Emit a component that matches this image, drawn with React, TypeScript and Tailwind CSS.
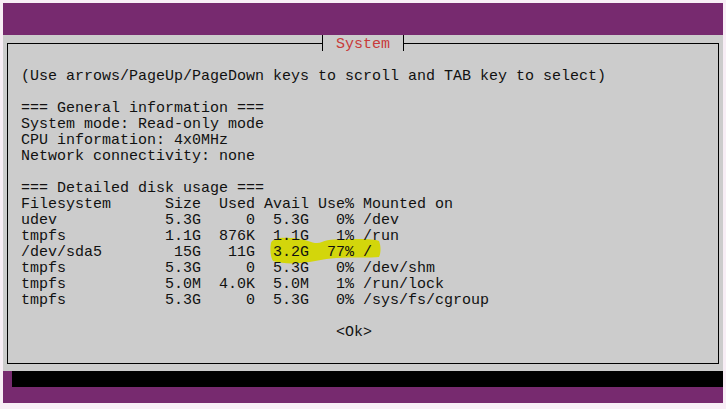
const purple = "bg-[#772a6f]";

const general = [
  "=== General information ===",
  "System mode: Read-only mode",
  "CPU information: 4x0MHz",
  "Network connectivity: none",
  "",
  "=== Detailed disk usage ===",
  "Filesystem      Size  Used Avail Use% Mounted on",
  "udev            5.3G     0  5.3G   0% /dev",
  "tmpfs           1.1G  876K  1.1G   1% /run",
  "/dev/sda5        15G   11G  3.2G  77% /",
  "tmpfs           5.3G     0  5.3G   0% /dev/shm",
  "tmpfs           5.0M  4.0K  5.0M   1% /run/lock",
  "tmpfs           5.3G     0  5.3G   0% /sys/fs/cgroup",
];

function Highlight() {
  // marker stroke over the /dev/sda5 row, drawn in page coordinates
  return (
    <svg
      className="pointer-events-none absolute left-[-8px] top-[-44px]"
      width={726}
      height={409}
      viewBox="0 0 726 409"
    >
      <path
        d="M271 243 C272 239 280 237 290 238 C298 238 304 240 308 241 C313 243 318 244 322 242 C328 239 340 239 352 239 C364 239 374 239 379 241 C381 246 381 253 379 257 C370 258 352 257 336 258 C322 259 314 262 300 263 C290 264 280 263 273 261 C270 256 270 248 271 243 Z"
        fill="#d3d60b"
      />
    </svg>
  );
}

export default function App() {
  return (
    <div className="w-[726px] h-[409px] bg-[#f8eef6] pt-[3px] px-[3px] pb-[6px] font-['Liberation_Mono',monospace] text-[15px] leading-[16px] text-[#111]">
      <div className="flex flex-col h-full">
        <div className={`h-[32px] ${purple}`} />
        <div className="h-[336px] bg-[#cccccc] px-[4px] pt-[8px] pb-[7px] flex">
          <div className="relative flex-1 border border-black flex flex-col">
            <Highlight />
            <div className="relative self-center -mt-[9px] h-[16px] w-[82px] border-x border-black bg-[#cccccc] text-center text-[#c83a3a] pt-[2px]">
              System
            </div>
            <div className="relative mt-[16px] pl-[13px] pt-[2px] whitespace-pre">
              <div>(Use arrows/PageUp/PageDown keys to scroll and TAB key to select)</div>
              <div className="h-[16px]" />
              {general.map((line, i) => (
                <div key={i} className="h-[16px]">{line}</div>
              ))}
              <div className="h-[16px]" />
              <div className="pl-[315px]">&lt;Ok&gt;</div>
            </div>
          </div>
        </div>
        <div className="flex h-[16px]">
          <div className={`w-[9px] ${purple}`} />
          <div className="flex-1 bg-black" />
        </div>
        <div className={`h-[16px] ${purple}`} />
      </div>
    </div>
  );
}
